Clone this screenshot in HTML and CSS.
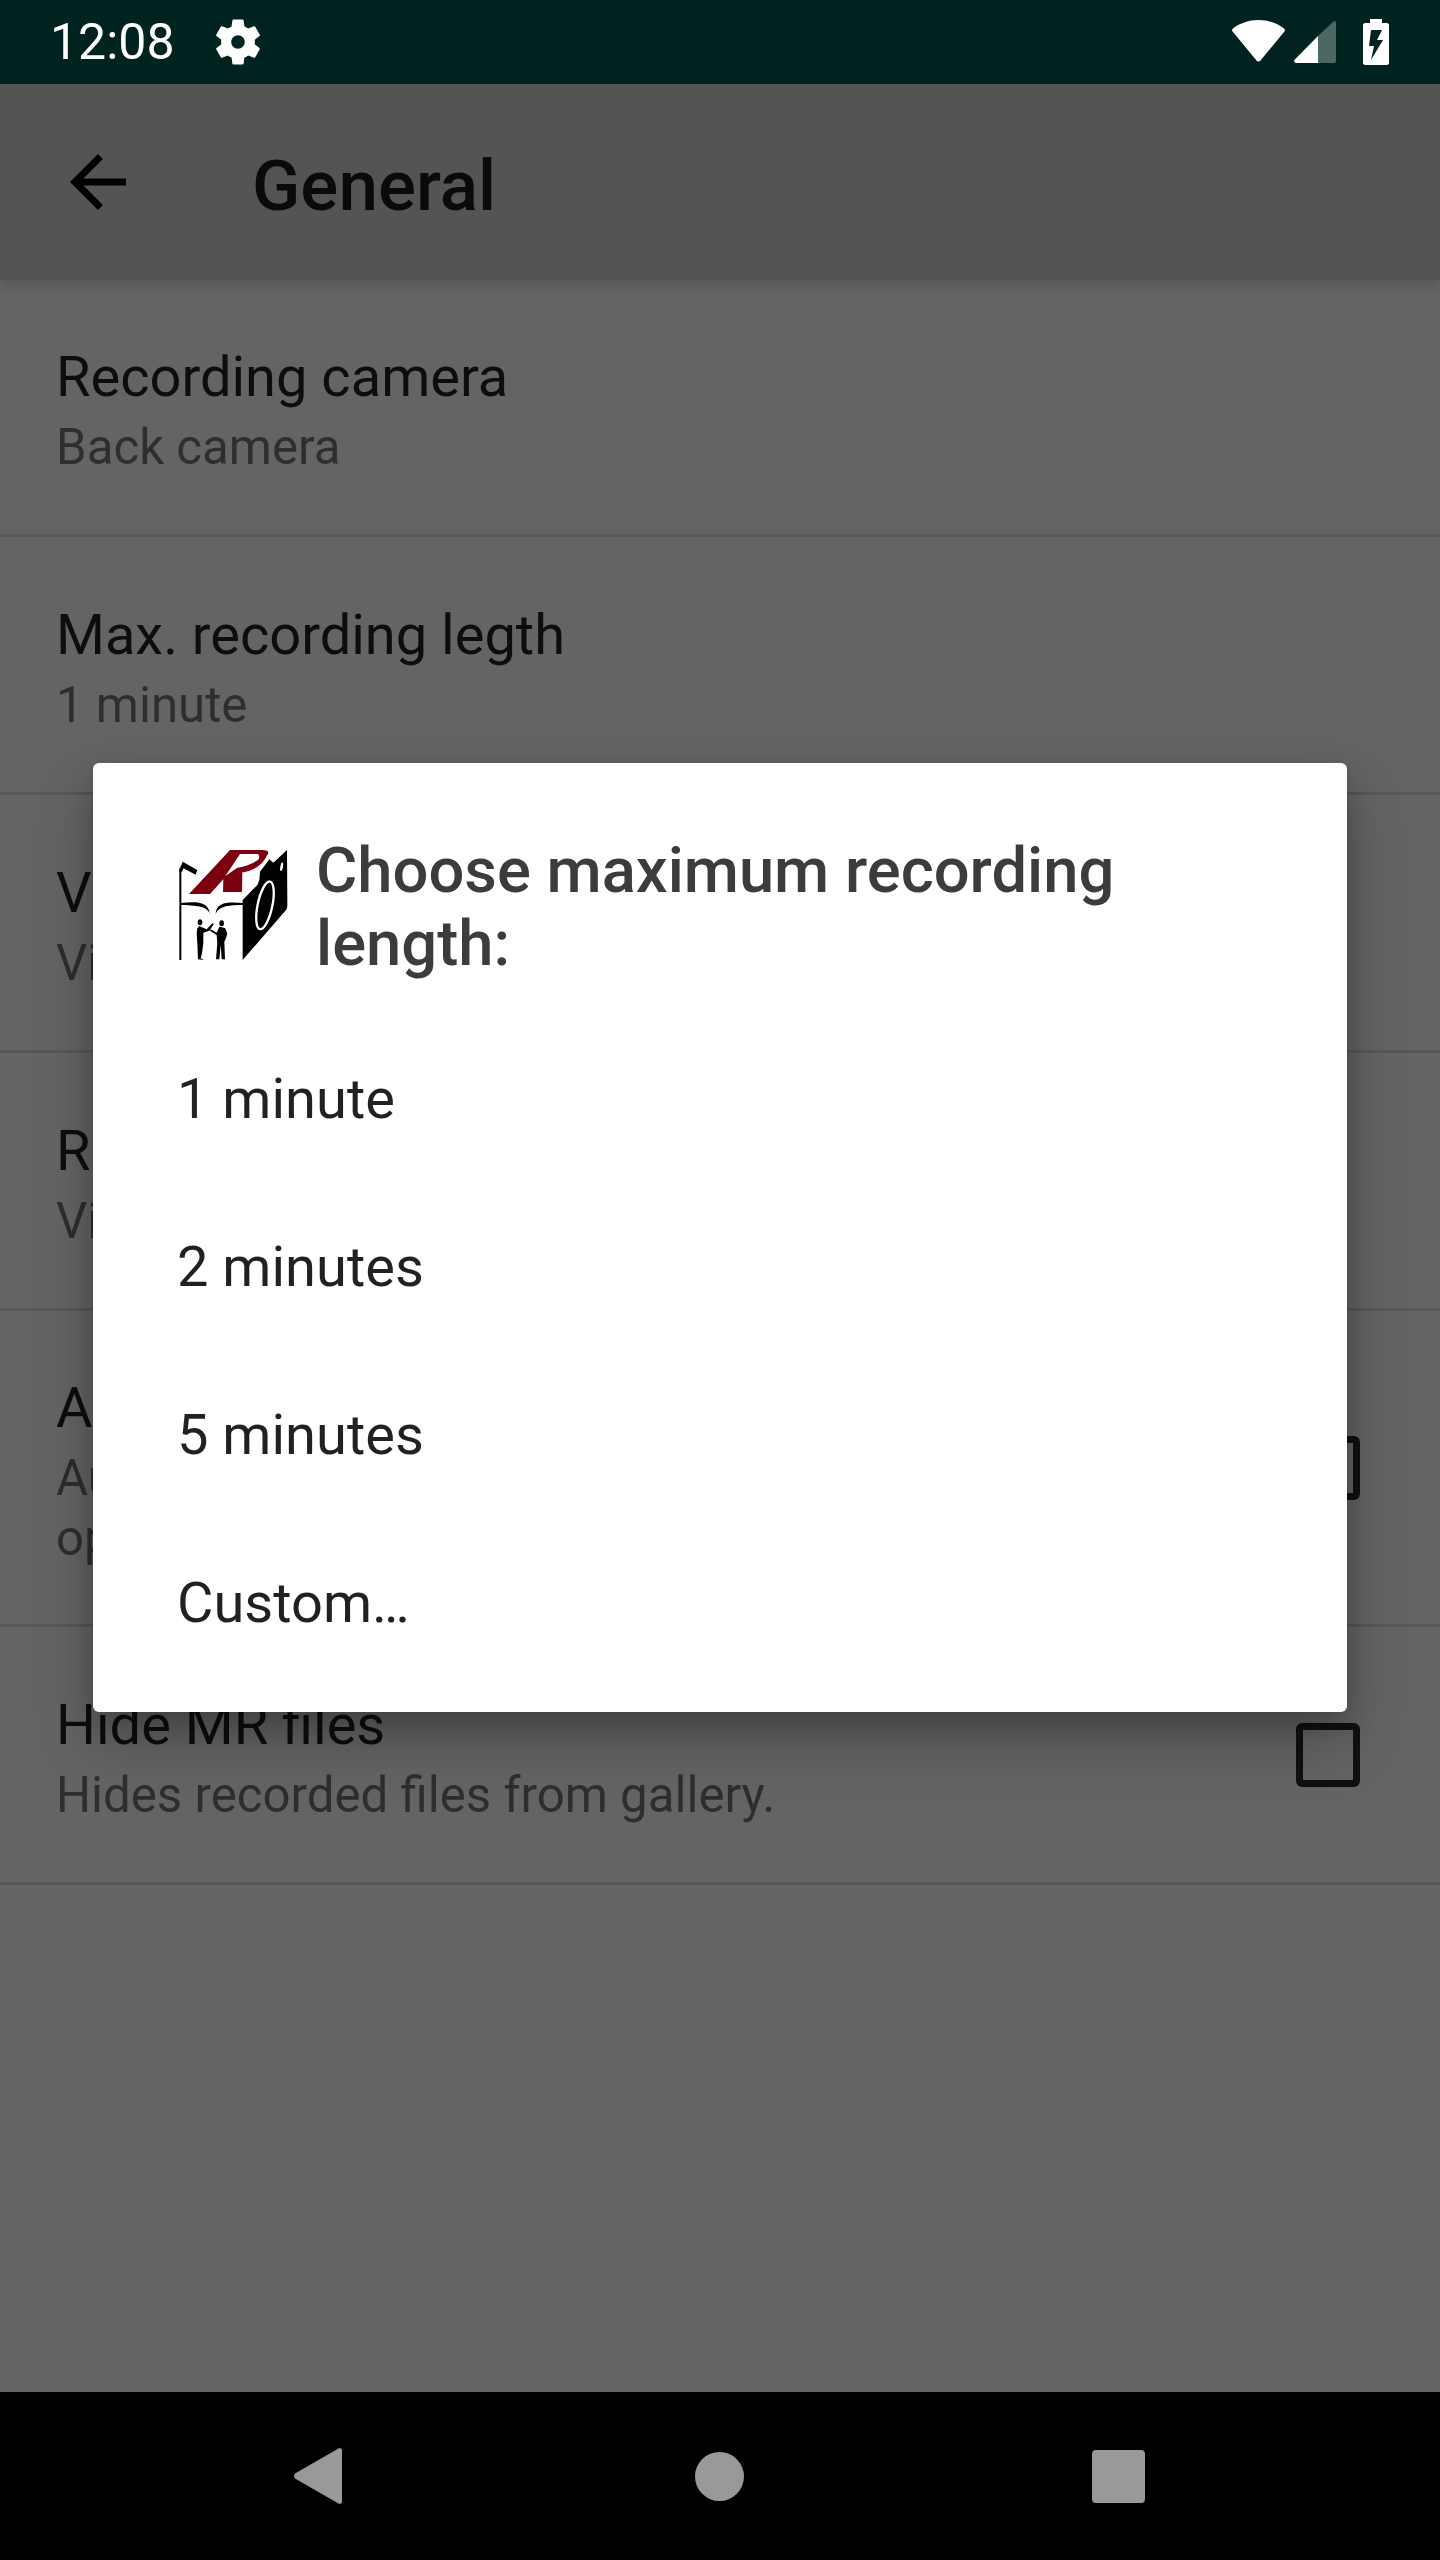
FILE: index.html
```html
<!DOCTYPE html>
<html lang="en">
<head>
  <meta charset="UTF-8">
  <title>General</title>
  <link rel="stylesheet" href="styles.css">
</head>
<body>
  <div class="phone">
    <div class="status-bar">
      <span class="clock">12:08</span>
      <svg class="gear" viewBox="0 0 24 24"><path fill="#fff" fill-rule="evenodd" d="M19.43 12.98c.04-.32.07-.64.07-.98s-.03-.66-.07-.98l2.11-1.65c.19-.15.24-.42.12-.64l-2-3.46c-.12-.22-.39-.3-.61-.22l-2.49 1c-.52-.4-1.08-.73-1.69-.98l-.38-2.65C14.46 2.18 14.25 2 14 2h-4c-.25 0-.46.18-.49.42l-.38 2.65c-.61.25-1.17.59-1.69.98l-2.49-1c-.23-.09-.49 0-.61.22l-2 3.46c-.13.22-.07.49.12.64l2.11 1.65c-.04.32-.07.65-.07.98s.03.66.07.98l-2.11 1.65c-.19.15-.24.42-.12.64l2 3.46c.12.22.39.3.61.22l2.49-1c.52.4 1.08.73 1.69.98l.38 2.65c.03.24.24.42.49.42h4c.25 0 .46-.18.49-.42l.38-2.65c.61-.25 1.17-.59 1.69-.98l2.49 1c.23.09.49 0 .61-.22l2-3.46c.12-.22.07-.49-.12-.64l-2.11-1.65zM12 15c-1.66 0-3-1.34-3-3s1.34-3 3-3 3 1.34 3 3-1.34 3-3 3z"/></svg>
      <div class="status-icons">
        <svg class="wifi" viewBox="0 0 53 43"><path fill="#fff" d="M1 9.500C8 4 17 1 26.500 1S45 4 52 9.500c1 .8 1.200 2 .4 3L28.500 41.500c-1 1.300-3 1.300-4 0L.6 12.500c-.8-1-.6-2.200.4-3z"/></svg>
        <svg class="signal" viewBox="0 0 42 42"><path fill="#4d6763" d="M40 0c1 0 2 1 2 2v38c0 1-1 2-2 2H24V15z"/><path fill="#fff" d="M24 15v27H2c-1.700 0-2.500-2-1.400-3.200z"/></svg>
        <svg class="battery" viewBox="0 0 26 46"><path fill="#fff" fill-rule="evenodd" d="M7 0h12v4h5c1 0 2 1 2 2v38c0 1-1 2-2 2H2c-1 0-2-1-2-2V6c0-1 1-2 2-2h5zM8 11l-2 16h5l-3 14 12-20h-6l5-10z"/></svg>
      </div>
    </div>

    <header class="toolbar">
      <svg class="back" viewBox="0 0 24 24"><path fill="#000" d="M20 11H7.830l5.590-5.590L12 4l-8 8 8 8 1.410-1.410L7.830 13H20v-2z"/></svg>
      <h1 class="toolbar-title">General</h1>
    </header>

    <main class="settings">
      <div class="row">
        <div class="row-text">
          <div class="row-title">Recording camera</div>
          <div class="row-summary">Back camera</div>
        </div>
      </div>
      <div class="row">
        <div class="row-text">
          <div class="row-title">Max. recording legth</div>
          <div class="row-summary">1 minute</div>
        </div>
      </div>
      <div class="row">
        <div class="row-text">
          <div class="row-title">Video quality</div>
          <div class="row-summary">Video</div>
        </div>
      </div>
      <div class="row">
        <div class="row-text">
          <div class="row-title">Resolution</div>
          <div class="row-summary">Video</div>
        </div>
      </div>
      <div class="row row-tall">
        <div class="row-text">
          <div class="row-title">Audio</div>
          <div class="row-summary">Audio<br>options</div>
        </div>
        <span class="checkbox"></span>
      </div>
      <div class="row">
        <div class="row-text">
          <div class="row-title">Hide MR files</div>
          <div class="row-summary">Hides recorded files from gallery.</div>
        </div>
        <span class="checkbox"></span>
      </div>
    </main>

    <div class="nav-bar">
      <svg class="nav-back" viewBox="0 0 48 56"><path fill="#999" d="M44 .8c1.500-1.500 4-.5 4 1.600v51.200c0 2.100-2.500 3.100-4 1.600L1 30.500c-1.300-1.400-1.300-3.600 0-5z"/></svg>
      <span class="nav-home"></span>
      <span class="nav-recent"></span>
    </div>

    <div class="scrim">
      <div class="dialog">
        <div class="dialog-head">
          <svg class="logo" viewBox="54 60 330 333">
            <path fill="#7d0010" fill-rule="evenodd" d="M87 192 210 60h95c23 0 23 8 15 18-20 44-73 49-73 49l-1 59h-57l1-38-40 44zM240 72l-44 66 36-25c42-6 64-25 64-25 5-12-3-16-3-16z"/>
            <path d="M381 60l-41 38-12-10-28 37-2 25-6 15-44 45v180l130-150c4-5 4-10 4-15z"/>
            <ellipse cx="315" cy="226" rx="22" ry="73" fill="#000" stroke="#fff" stroke-width="7" transform="rotate(12 315 226)"/>
            <ellipse cx="365" cy="110" rx="4" ry="13" fill="#fff" transform="rotate(10 365 110)"/>
            <rect x="58" y="115" width="6" height="275"/>
            <path d="M68 95l44 25-5 14-45-24z"/>
            <path d="M62 108l9 5-5 12h-8z"/>
            <path d="M62 219c40-4 84-8 87 32-8-24-44-24-87-26zM250 219c-40-3-80-6-83 32 10-24 42-26 83-26z"/>
            <ellipse cx="120" cy="277" rx="7" ry="9"/>
            <path d="M118 288l8 4 14 6 15-16 5-4v6l-12 18-18 6v32l-4 30-4 15 10 5-18-2-2-48-2-30 2-15z"/>
            <ellipse cx="185" cy="280" rx="7" ry="9"/>
            <path d="M178 290l17 4 7 16-4 15-5 10 2 53h-10l-3-43-4 43h-10l4-48-2-25-20-13 2-4 18 10z"/>
          </svg>
          <h2 class="dialog-title">Choose maximum recording length:</h2>
        </div>
        <div class="option">1 minute</div>
        <div class="option">2 minutes</div>
        <div class="option">5 minutes</div>
        <div class="option">Custom…</div>
      </div>
    </div>
  </div>
</body>
</html>
```

FILE: styles.css
```css
* { box-sizing: border-box; margin: 0; padding: 0; }
body { font-family: Roboto, sans-serif; background-color: #000; }

.phone { width: 1440px; height: 2560px; display: flex; flex-direction: column; position: relative; overflow: hidden; background-color: #fafafa; }

.status-bar { height: 84px; flex: none; display: flex; align-items: center; padding-left: 50px; padding-right: 51px; background-color: #00231f; color: #fff; }
.clock { font-size: 50px; width: 154px; }
.gear { width: 54px; height: 54px; margin-left: 7px; }
.status-icons { margin-left: auto; display: flex; align-items: center; }
.wifi { width: 53px; height: 43px; margin-right: 9px; margin-top: -3px; }
.signal { width: 42px; height: 42px; margin-right: 27px; }
.battery { width: 26px; height: 46px; }

.toolbar { height: 196px; flex: none; display: flex; align-items: center; padding-left: 56px; background-color: #d2d2d2; box-shadow: 0 4px 12px rgba(0, 0, 0, 0.15); position: relative; }
.back { width: 84px; height: 84px; }
.toolbar-title { font-size: 71px; font-weight: 500; margin-left: 112px; padding-top: 6px; color: rgba(0, 0, 0, 0.87); }

.settings { flex: 1; margin-top: -1px; }
.row { height: 258px; padding: 4px 80px 0 56px; display: flex; align-items: center; justify-content: space-between; border-bottom: 3px solid #dcdcdc; }
.row-tall { height: 316px; }
.row-title { font-size: 56px; line-height: 74px; color: rgba(0, 0, 0, 0.87); }
.row-summary { font-size: 49.2px; line-height: 60px; color: rgba(0, 0, 0, 0.54); margin-top: 3px; }
.checkbox { width: 64px; height: 64px; margin-top: -4px; border: 7px solid #2a2a2a; border-radius: 6px; flex: none; }

.nav-bar { height: 168px; flex: none; display: flex; align-items: center; background-color: #000; }
.nav-back { width: 48px; height: 56px; margin-left: 294px; }
.nav-home { width: 49px; height: 49px; margin-left: 353px; border-radius: 50%; background-color: #999; }
.nav-recent { width: 53px; height: 53px; margin-left: 348px; border-radius: 4px; background-color: #999; }

.scrim { position: absolute; top: 84px; left: 0; right: 0; bottom: 168px; display: flex; align-items: center; justify-content: center; background-color: rgba(0, 0, 0, 0.6); }
.dialog { width: 1254px; height: 949px; margin-bottom: 1px; padding: 76px 85px 0 84px; background-color: #fff; border-radius: 6px; box-shadow: 0 32px 60px rgba(0, 0, 0, 0.22), 0 10px 30px rgba(0, 0, 0, 0.2); }
.dialog-head { display: flex; align-items: center; height: 132px; margin-bottom: 44px; }
.logo { width: 110px; height: 111px; flex: none; margin-left: 1px; margin-right: 28px; }
.dialog-title { font-size: 63.3px; font-weight: 500; line-height: 73px; padding-top: 4px; color: #3c3c3c; }
.option { height: 168px; display: flex; align-items: center; font-size: 56px; color: rgba(0, 0, 0, 0.87); }
```
